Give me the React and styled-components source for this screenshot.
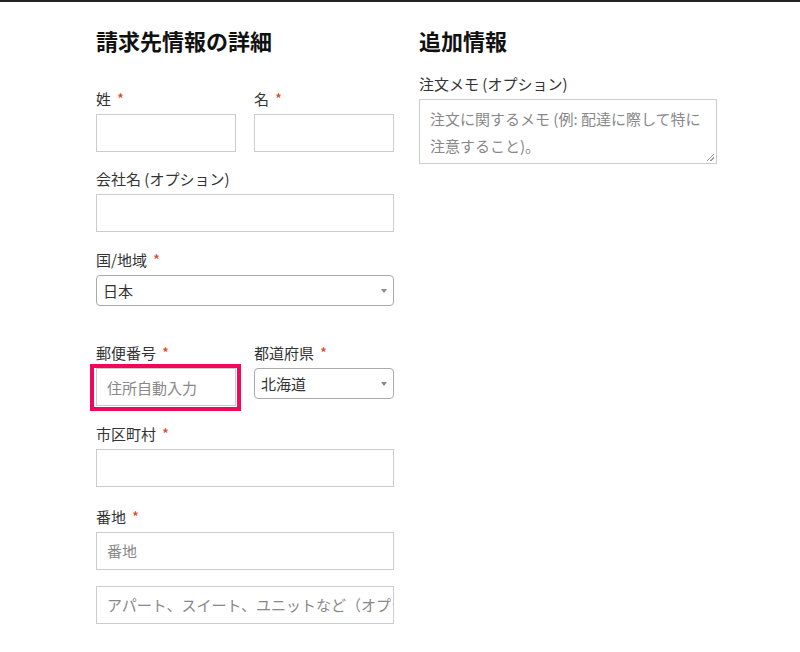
import React from "react";
import styled, { createGlobalStyle } from "styled-components";

const G = createGlobalStyle`
  body{margin:0;background:#fff;font-family:"Noto Sans CJK JP","Noto Sans",sans-serif;color:#333;}
`;
const Page = styled.div`border-top:2px solid #222;height:650px;display:flex;gap:25px;padding-left:96px;`;
const Col = styled.div`width:298px;display:flex;flex-direction:column;`;
const H = styled.h3`margin:22px 0 0;font-size:22px;line-height:32px;font-weight:700;color:#111;`;
const Row = styled.div`display:flex;gap:18px;`;
const Field = styled.div`display:flex;flex-direction:column;flex:1;min-width:0;margin-top:${p=>p.$mt}px;`;
const Label = styled.label`font-size:15px;line-height:24px;color:#333;margin-bottom:3px;`;
const Req = styled.span`color:#e2401c;margin-left:6px;`;
const Input = styled.div`box-sizing:border-box;height:38px;border:1px solid #ccc;background:#fff;padding:0 10px;display:flex;align-items:center;font-size:15px;color:#888;white-space:nowrap;overflow:hidden;`;
const Select = styled.div`box-sizing:border-box;height:31px;border:1px solid #aaa;border-radius:4px;padding:0 6px;display:flex;align-items:center;justify-content:space-between;font-size:15px;color:#333;
  &::after{content:"";border-left:3px solid transparent;border-right:3px solid transparent;border-top:4px solid #888;}`;
const Hl = styled.div`margin:-4px -5px -5px -6px;border:4px solid #f0085a;padding:0 1px 1px 2px;`;
const Area = styled.div`box-sizing:border-box;height:65px;border:1px solid #ccc;padding:5px 10px;font-size:15px;line-height:27px;color:#888;position:relative;
  &::after{content:"";position:absolute;right:2px;bottom:2px;width:7px;height:7px;background:linear-gradient(135deg,transparent 45%,#999 45%,#999 55%,transparent 55%,transparent 70%,#999 70%,#999 80%,transparent 80%);}`;

export default function App(){
  return <><G/><Page>
    <Col>
      <H>請求先情報の詳細</H>
      <Row>
        <Field $mt={31}><Label>姓<Req>*</Req></Label><Input/></Field>
        <Field $mt={31}><Label>名<Req>*</Req></Label><Input/></Field>
      </Row>
      <Field $mt={15}><Label>会社名 (オプション)</Label><Input/></Field>
      <Field $mt={15}><Label>国/地域<Req>*</Req></Label><Select>日本</Select></Field>
      <Row>
        <Field $mt={27}><Label>郵便番号<Req>*</Req></Label><Hl><Input>住所自動入力</Input></Hl></Field>
        <Field $mt={27}><Label>都道府県<Req>*</Req></Label><Select>北海道</Select></Field>
      </Row>
      <Field $mt={16}><Label>市区町村<Req>*</Req></Label><Input/></Field>
      <Field $mt={16}><Label>番地<Req>*</Req></Label><Input>番地</Input></Field>
      <Field $mt={15}><Input>アパート、スイート、ユニットなど（オプション）</Input></Field>
    </Col>
    <Col>
      <H>追加情報</H>
      <Field $mt={16}><Label>注文メモ (オプション)</Label><Area>注文に関するメモ (例: 配達に際して特に注意すること)。</Area></Field>
    </Col>
  </Page></>;
}
